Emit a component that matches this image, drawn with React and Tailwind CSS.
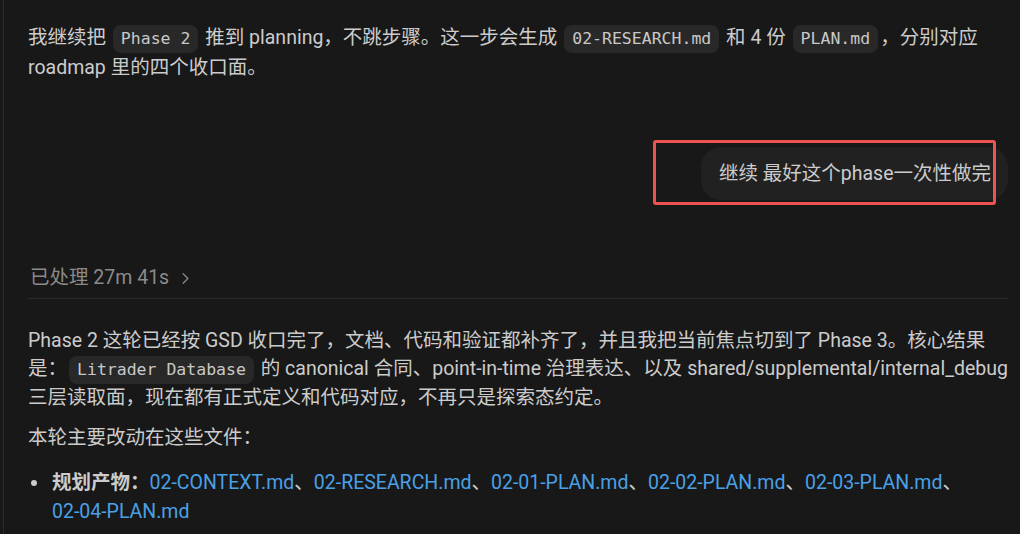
import React from 'react';
import { ChevronRight } from 'lucide-react';

const sans = "font-['Roboto','Noto_Sans_CJK_SC',sans-serif]";

const Code = ({ children }) => (
  <code className="mx-[2px] inline-block rounded-[8px] bg-[#282828] px-[8px] leading-[28px] font-['DejaVu_Sans_Mono',monospace] text-[16.5px] text-[#c8c8c8]">
    {children}
  </code>
);

const Link = ({ children }) => <span className="whitespace-nowrap text-[#4aa0e6]">{children}</span>;

const planFiles = [
  '02-CONTEXT.md',
  '02-RESEARCH.md',
  '02-01-PLAN.md',
  '02-02-PLAN.md',
  '02-03-PLAN.md',
  '02-04-PLAN.md',
];

const App = () => {
  return (
    <div className={`flex h-[534px] w-[1020px] overflow-hidden bg-[#181818] text-[19.5px] text-[#cccccc] ${sans}`}>
      <div className="w-[3px]" />
      <div className="w-px bg-[#2b2b2b]" />

      <main className="flex-1 pl-[24px] pr-[12px] pt-[23px]">
        <p className="leading-[29px]">
          我继续把 <Code>Phase 2</Code> 推到 planning，不跳步骤。这一步会生成 <Code>02-RESEARCH.md</Code> 和 4 份{' '}
          <Code>PLAN.md</Code>，分别对应 roadmap 里的四个收口面。
        </p>

        <div className="relative mt-[65px] flex justify-end">
          <div className="rounded-[20px] bg-[#212121] py-[12px] pl-[18px] pr-[17px] leading-[29px]">
            继续 最好这个phase一次性做完
          </div>
          {/* annotation frame */}
          <div className="absolute left-[625px] top-[-7px] h-[65px] w-[343px] rounded-[3px] border-[3px] border-[#ef5350]" />
        </div>

        <div className="mt-[64px] flex items-center gap-[7px] pl-[2px] leading-[28px] text-[#8b8b8b]">
          <span>已处理 27m 41s</span>
          <ChevronRight size={19} strokeWidth={1.5} />
        </div>
        <div className="mt-[6px] h-px bg-[#2a2a2a]" />

        <p className="mt-[28px] leading-[28px]">
          Phase 2 这轮已经按 GSD 收口完了，文档、代码和验证都补齐了，并且我把当前焦点切到了 Phase 3。核心结果是：
          <Code>Litrader Database</Code> 的 canonical 合同、point-in-time 治理表达、以及
          shared/supplemental/internal_debug 三层读取面，现在都有正式定义和代码对应，不再只是探索态约定。
        </p>

        <p className="mt-[12px] leading-[28px]">本轮主要改动在这些文件：</p>

        <ul className="mt-[16px] leading-[29px]">
          <li className="flex">
            <span className="flex h-[29px] w-[24px] shrink-0 items-center pl-[3px]">
              <span className="h-[6px] w-[6px] rounded-full bg-[#cccccc]" />
            </span>
            <span>
              <span className="font-bold">规划产物：</span>
              {planFiles.map((f, i) => (
                <React.Fragment key={f}>
                  <Link>{f}</Link>
                  {i < planFiles.length - 1 && '、'}
                </React.Fragment>
              ))}
            </span>
          </li>
        </ul>
      </main>
    </div>
  );
};

export default App;
